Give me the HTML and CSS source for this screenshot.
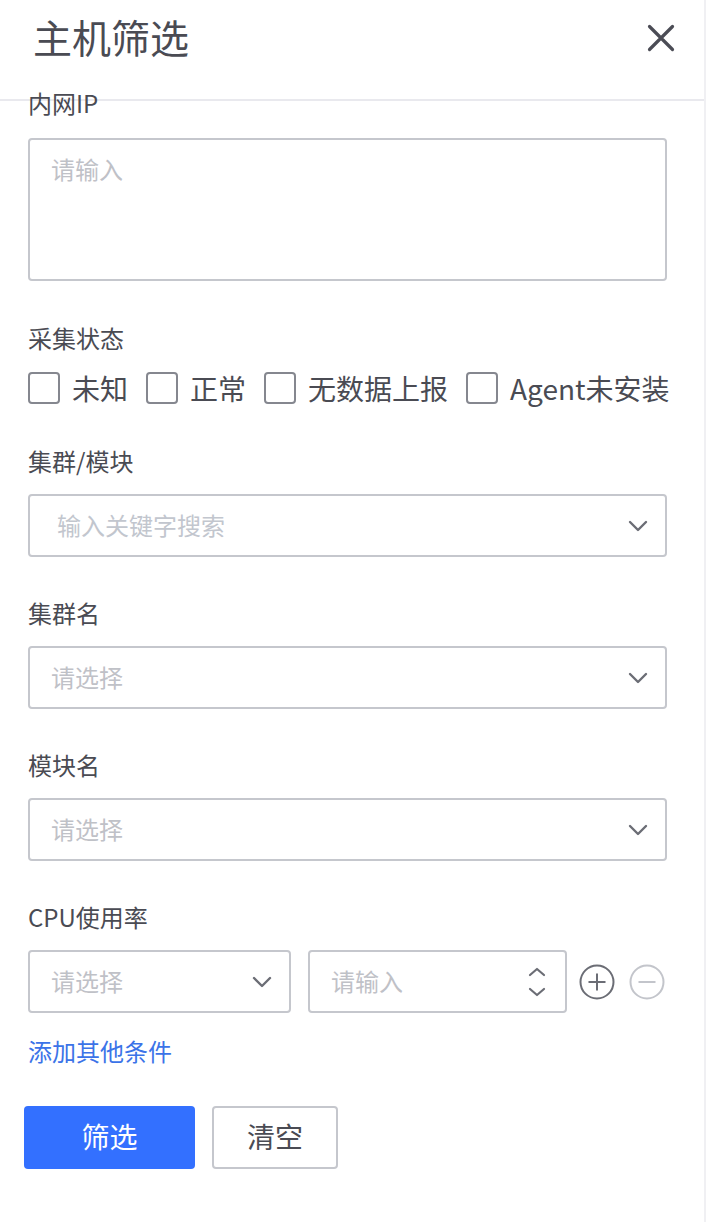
FILE: index.html
```html
<!DOCTYPE html>
<html lang="zh-CN">
<head>
<meta charset="utf-8">
<title>主机筛选</title>
<link rel="stylesheet" href="styles.css">
</head>
<body>
<div class="panel">
  <header class="header">
    <h1 class="title">主机筛选</h1>
    <button class="close" aria-label="关闭">
      <svg width="28" height="28" viewBox="0 0 28 28"><path d="M2.5 2.5L25.5 25.5M25.5 2.5L2.5 25.5" stroke="#4b4c55" stroke-width="3.2" stroke-linecap="round" fill="none"/></svg>
    </button>
  </header>
  <form class="form">
    <div class="item item-ip">
      <div class="label">内网IP</div>
      <div class="textarea"><span class="ph">请输入</span></div>
    </div>
    <div class="item">
      <div class="label">采集状态</div>
      <div class="checks">
        <label class="check"><span class="box"></span><span>未知</span></label>
        <label class="check"><span class="box"></span><span>正常</span></label>
        <label class="check"><span class="box"></span><span>无数据上报</span></label>
        <label class="check"><span class="box"></span><span>Agent未安装</span></label>
      </div>
    </div>
    <div class="item">
      <div class="label">集群/模块</div>
      <div class="select search"><span class="ph ph-search">输入关键字搜索</span>
        <svg class="chev" width="20" height="12" viewBox="0 0 20 12"><path d="M2 2L10 10L18 2" stroke="#6b6d75" stroke-width="2.4" fill="none" stroke-linecap="round" stroke-linejoin="round"/></svg>
      </div>
    </div>
    <div class="item">
      <div class="label">集群名</div>
      <div class="select"><span class="ph">请选择</span>
        <svg class="chev" width="20" height="12" viewBox="0 0 20 12"><path d="M2 2L10 10L18 2" stroke="#6b6d75" stroke-width="2.4" fill="none" stroke-linecap="round" stroke-linejoin="round"/></svg>
      </div>
    </div>
    <div class="item">
      <div class="label">模块名</div>
      <div class="select"><span class="ph">请选择</span>
        <svg class="chev" width="20" height="12" viewBox="0 0 20 12"><path d="M2 2L10 10L18 2" stroke="#6b6d75" stroke-width="2.4" fill="none" stroke-linecap="round" stroke-linejoin="round"/></svg>
      </div>
    </div>
    <div class="item item-cpu">
      <div class="label">CPU使用率</div>
      <div class="cpu-row">
        <div class="select cpu-select"><span class="ph">请选择</span>
          <svg class="chev" width="20" height="12" viewBox="0 0 20 12"><path d="M2 2L10 10L18 2" stroke="#6b6d75" stroke-width="2.4" fill="none" stroke-linecap="round" stroke-linejoin="round"/></svg>
        </div>
        <div class="select number"><span class="ph">请输入</span>
          <div class="spin">
            <svg width="18" height="10" viewBox="0 0 18 10"><path d="M2 8L9 2L16 8" stroke="#6b6d75" stroke-width="2.2" fill="none" stroke-linecap="round" stroke-linejoin="round"/></svg>
            <svg width="18" height="10" viewBox="0 0 18 10"><path d="M2 2L9 8L16 2" stroke="#6b6d75" stroke-width="2.2" fill="none" stroke-linecap="round" stroke-linejoin="round"/></svg>
          </div>
        </div>
        <svg class="circ" width="36" height="36" viewBox="0 0 36 36"><circle cx="18" cy="18" r="16.5" stroke="#6b6d75" stroke-width="2" fill="none"/><path d="M9.5 18H26.5M18 9.5V26.5" stroke="#6b6d75" stroke-width="2" fill="none"/></svg>
        <svg class="circ minus" width="36" height="36" viewBox="0 0 36 36"><circle cx="18" cy="18" r="16.5" stroke="#c3c5cb" stroke-width="2" fill="none"/><path d="M9.5 18H26.5" stroke="#c3c5cb" stroke-width="2" fill="none"/></svg>
      </div>
    </div>
    <a class="add-link">添加其他条件</a>
    <div class="actions">
      <button type="button" class="btn btn-primary">筛选</button>
      <button type="button" class="btn btn-default">清空</button>
    </div>
  </form>
</div>
</body>
</html>
```
FILE: styles.css
```css
* { box-sizing: border-box; }
html, body { margin: 0; padding: 0; background: #fff; }
body {
  font-family: "Noto Sans CJK SC", "Noto Sans", sans-serif;
  color: #4a4b53;
}
.panel {
  width: 706px;
  min-height: 1222px;
  border-right: 2px solid #f0f0f3;
  background: #fff;
}
.header {
  height: 101px;
  border-bottom: 2px solid #e9e9ee;
  display: flex;
  justify-content: space-between;
  align-items: flex-start;
  padding: 0 29px 0 33px;
}
.title {
  margin: 0;
  font-size: 39px;
  font-weight: 400;
  line-height: 72px;
  color: #4a4b53;
}
.close {
  margin-top: 24px;
  width: 28px;
  height: 28px;
  padding: 0;
  border: 0;
  background: transparent;
  display: flex;
}
.form {
  margin-top: -14px;
  padding: 0 37px 0 28px;
}
.item { margin-bottom: 40px; }
.label {
  font-size: 24px;
  line-height: 32px;
  height: 32px;
  margin-bottom: 17px;
  color: #4a4b53;
}
.item-ip { margin-bottom: 41px; }
.item-ip .label { margin-bottom: 19px; }
.ph { color: #bfc1c7; font-size: 24px; line-height: 32px; }
.ph-search { color: #c2c6ce; }
.textarea {
  height: 143px;
  border: 2px solid #c5c7cd;
  border-radius: 4px;
  padding: 13px 21px;
}
.checks {
  display: flex;
  align-items: center;
  gap: 18px;
  height: 34px;
  white-space: nowrap;
}
.check {
  display: flex;
  align-items: center;
  gap: 12px;
  font-size: 28px;
  line-height: 34px;
  color: #4a4b53;
  flex: none;
  white-space: nowrap;
}
.box {
  width: 32px;
  height: 32px;
  border: 2px solid #85878f;
  border-radius: 4px;
  flex: none;
}
.select {
  height: 63px;
  border: 2px solid #c5c7cd;
  border-radius: 4px;
  display: flex;
  align-items: center;
  justify-content: space-between;
  padding: 0 17px 2px 21px;
}
.select .chev { margin-top: 2px; }
.select.search { padding-left: 27px; }
.chev { flex: none; }
.cpu-row {
  display: flex;
  align-items: center;
}
.cpu-select { width: 263px; padding-right: 17px; }
.number { width: 259px; margin-left: 17px; padding-right: 19px; }
.spin {
  display: flex;
  flex-direction: column;
  gap: 10px;
  margin-top: 2px;
}
.circ { margin-left: 12px; flex: none; }
.circ.minus { margin-left: 14px; }
.item-cpu { margin-bottom: 22px; }
.add-link {
  display: block;
  font-size: 24px;
  line-height: 32px;
  color: #3b73e8;
  cursor: pointer;
}
.actions {
  display: flex;
  gap: 17px;
  margin-top: 39px;
  margin-left: -4px;
}
.btn {
  height: 63px;
  border-radius: 4px;
  font-family: inherit;
  font-size: 28px;
  line-height: 1;
  padding: 0 0 3px;
}
.btn-primary {
  width: 171px;
  background: #3370ff;
  border: 0;
  color: #fff;
}
.btn-default {
  width: 126px;
  background: #fff;
  border: 2px solid #c5c7cd;
  color: #4a4b53;
}
```
